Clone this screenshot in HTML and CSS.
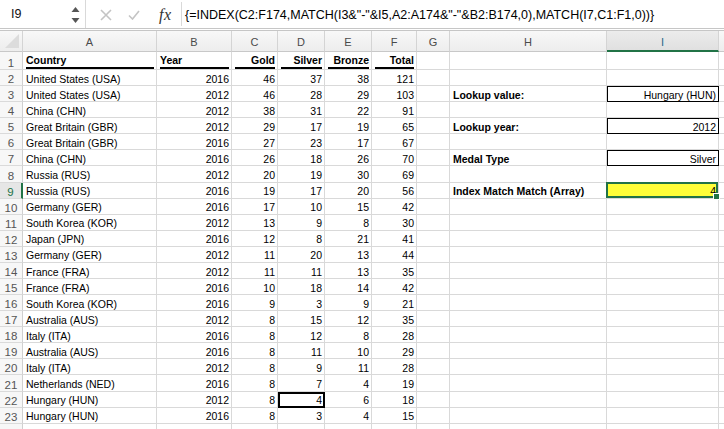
FILE: index.html
```html
<!DOCTYPE html>
<html>
<head>
<meta charset="utf-8">
<link rel="stylesheet" href="styles.css">
</head>
<body>
<div class="toolbar">
  <div class="namebox">
    <span class="ref">I9</span>
    <svg class="spin" width="9" height="18" viewBox="0 0 9 18"><polygon points="4.5,1 8.5,6 0.5,6" fill="#555"/><polygon points="0.5,12 8.5,12 4.5,17" fill="#555"/></svg>
  </div>
  <div class="btns">
    <svg class="ico x" width="12" height="12" viewBox="0 0 12 12"><path d="M1 1L11 11M11 1L1 11" stroke="#c4c4c4" stroke-width="1.6" fill="none"/></svg>
    <svg class="ico chk" width="12" height="10" viewBox="0 0 12 10"><path d="M1 5.5L4.5 9L11 1" stroke="#c4c4c4" stroke-width="1.6" fill="none"/></svg>
    <span class="fx">fx</span>
  </div>
  <div class="formula">{=INDEX(C2:F174,MATCH(I3&amp;"-"&amp;I5,A2:A174&amp;"-"&amp;B2:B174,0),MATCH(I7,C1:F1,0))}</div>
</div>

<div class="sheet">
  <div class="ch corner"></div><div class="ch">A</div><div class="ch">B</div><div class="ch">C</div><div class="ch">D</div><div class="ch">E</div><div class="ch">F</div><div class="ch">G</div><div class="ch">H</div><div class="ch sel">I</div><div class="ch end"></div>

  <div class="rh">1</div><div class="c b"><span class="u">Country</span></div><div class="c b"><span class="u">Year</span></div><div class="c b"><span class="u r">Gold</span></div><div class="c b"><span class="u r">Silver</span></div><div class="c b"><span class="u r">Bronze</span></div><div class="c b"><span class="u r">Total</span></div><div class="c"></div><div class="c"></div><div class="c"></div><div class="c end"></div>

  <div class="rh">2</div><div class="c">United States (USA)</div><div class="c n">2016</div><div class="c n">46</div><div class="c n">37</div><div class="c n">38</div><div class="c n">121</div><div class="c"></div><div class="c"></div><div class="c"></div><div class="c end"></div>

  <div class="rh">3</div><div class="c">United States (USA)</div><div class="c n">2012</div><div class="c n">46</div><div class="c n">28</div><div class="c n">29</div><div class="c n">103</div><div class="c"></div><div class="c b">Lookup value:</div><div class="c n box">Hungary (HUN)</div><div class="c end"></div>

  <div class="rh">4</div><div class="c">China (CHN)</div><div class="c n">2012</div><div class="c n">38</div><div class="c n">31</div><div class="c n">22</div><div class="c n">91</div><div class="c"></div><div class="c"></div><div class="c"></div><div class="c end"></div>

  <div class="rh">5</div><div class="c">Great Britain (GBR)</div><div class="c n">2012</div><div class="c n">29</div><div class="c n">17</div><div class="c n">19</div><div class="c n">65</div><div class="c"></div><div class="c b">Lookup year:</div><div class="c n box">2012</div><div class="c end"></div>

  <div class="rh">6</div><div class="c">Great Britain (GBR)</div><div class="c n">2016</div><div class="c n">27</div><div class="c n">23</div><div class="c n">17</div><div class="c n">67</div><div class="c"></div><div class="c"></div><div class="c"></div><div class="c end"></div>

  <div class="rh">7</div><div class="c">China (CHN)</div><div class="c n">2016</div><div class="c n">26</div><div class="c n">18</div><div class="c n">26</div><div class="c n">70</div><div class="c"></div><div class="c b">Medal Type</div><div class="c n box">Silver</div><div class="c end"></div>

  <div class="rh">8</div><div class="c">Russia (RUS)</div><div class="c n">2012</div><div class="c n">20</div><div class="c n">19</div><div class="c n">30</div><div class="c n">69</div><div class="c"></div><div class="c"></div><div class="c"></div><div class="c end"></div>

  <div class="rh selrow">9</div><div class="c">Russia (RUS)</div><div class="c n">2016</div><div class="c n">19</div><div class="c n">17</div><div class="c n">20</div><div class="c n">56</div><div class="c"></div><div class="c b">Index Match Match (Array)</div><div class="c n active">4</div><div class="c end"></div>

  <div class="rh">10</div><div class="c">Germany (GER)</div><div class="c n">2016</div><div class="c n">17</div><div class="c n">10</div><div class="c n">15</div><div class="c n">42</div><div class="c"></div><div class="c"></div><div class="c"></div><div class="c end"></div>

  <div class="rh">11</div><div class="c">South Korea (KOR)</div><div class="c n">2012</div><div class="c n">13</div><div class="c n">9</div><div class="c n">8</div><div class="c n">30</div><div class="c"></div><div class="c"></div><div class="c"></div><div class="c end"></div>

  <div class="rh">12</div><div class="c">Japan (JPN)</div><div class="c n">2016</div><div class="c n">12</div><div class="c n">8</div><div class="c n">21</div><div class="c n">41</div><div class="c"></div><div class="c"></div><div class="c"></div><div class="c end"></div>

  <div class="rh">13</div><div class="c">Germany (GER)</div><div class="c n">2012</div><div class="c n">11</div><div class="c n">20</div><div class="c n">13</div><div class="c n">44</div><div class="c"></div><div class="c"></div><div class="c"></div><div class="c end"></div>

  <div class="rh">14</div><div class="c">France (FRA)</div><div class="c n">2012</div><div class="c n">11</div><div class="c n">11</div><div class="c n">13</div><div class="c n">35</div><div class="c"></div><div class="c"></div><div class="c"></div><div class="c end"></div>

  <div class="rh">15</div><div class="c">France (FRA)</div><div class="c n">2016</div><div class="c n">10</div><div class="c n">18</div><div class="c n">14</div><div class="c n">42</div><div class="c"></div><div class="c"></div><div class="c"></div><div class="c end"></div>

  <div class="rh">16</div><div class="c">South Korea (KOR)</div><div class="c n">2016</div><div class="c n">9</div><div class="c n">3</div><div class="c n">9</div><div class="c n">21</div><div class="c"></div><div class="c"></div><div class="c"></div><div class="c end"></div>

  <div class="rh">17</div><div class="c">Australia (AUS)</div><div class="c n">2012</div><div class="c n">8</div><div class="c n">15</div><div class="c n">12</div><div class="c n">35</div><div class="c"></div><div class="c"></div><div class="c"></div><div class="c end"></div>

  <div class="rh">18</div><div class="c">Italy (ITA)</div><div class="c n">2016</div><div class="c n">8</div><div class="c n">12</div><div class="c n">8</div><div class="c n">28</div><div class="c"></div><div class="c"></div><div class="c"></div><div class="c end"></div>

  <div class="rh">19</div><div class="c">Australia (AUS)</div><div class="c n">2016</div><div class="c n">8</div><div class="c n">11</div><div class="c n">10</div><div class="c n">29</div><div class="c"></div><div class="c"></div><div class="c"></div><div class="c end"></div>

  <div class="rh">20</div><div class="c">Italy (ITA)</div><div class="c n">2012</div><div class="c n">8</div><div class="c n">9</div><div class="c n">11</div><div class="c n">28</div><div class="c"></div><div class="c"></div><div class="c"></div><div class="c end"></div>

  <div class="rh">21</div><div class="c">Netherlands (NED)</div><div class="c n">2016</div><div class="c n">8</div><div class="c n">7</div><div class="c n">4</div><div class="c n">19</div><div class="c"></div><div class="c"></div><div class="c"></div><div class="c end"></div>

  <div class="rh">22</div><div class="c">Hungary (HUN)</div><div class="c n">2012</div><div class="c n">8</div><div class="c n thick">4</div><div class="c n">6</div><div class="c n">18</div><div class="c"></div><div class="c"></div><div class="c"></div><div class="c end"></div>

  <div class="rh">23</div><div class="c">Hungary (HUN)</div><div class="c n">2016</div><div class="c n">8</div><div class="c n">3</div><div class="c n">4</div><div class="c n">15</div><div class="c"></div><div class="c"></div><div class="c"></div><div class="c end"></div>

  <div class="rh"></div><div class="c"></div><div class="c"></div><div class="c"></div><div class="c"></div><div class="c"></div><div class="c"></div><div class="c"></div><div class="c"></div><div class="c"></div><div class="c end"></div>
</div>
</body>
</html>
```

FILE: styles.css
```css
* { box-sizing: border-box; }
html, body { margin: 0; padding: 0; background: #fff; }
body {
  width: 724px;
  height: 429px;
  overflow: hidden;
  font-family: "Liberation Sans", Arial, sans-serif;
  color: #000;
}

/* ---------- formula toolbar ---------- */
.toolbar {
  display: flex;
  align-items: stretch;
  height: 29px;
  border-bottom: 1px solid #c6c6c6;
  margin-bottom: 1px;
  background: #fff;
}
.namebox {
  width: 86px;
  display: flex;
  align-items: center;
  justify-content: space-between;
  padding: 0 5px 0 11px;
  border-right: 1px solid #d9d9d9;
}
.ref { font-size: 12.5px; color: #111; }
.spin { display: block; margin-top: 1px; }
.btns {
  width: 96px;
  display: flex;
  align-items: center;
  padding-left: 14px;
  border-right: 1px solid #d9d9d9;
  margin: 2px 0;
}
.ico { display: block; }
.ico.x { margin-right: 16px; margin-top: 2px; }
.ico.chk { margin-right: 19px; margin-top: 2px; }
.fx {
  font-family: "Liberation Serif", serif;
  font-style: italic;
  font-size: 16px;
  color: #333;
  letter-spacing: 0.5px;
  margin-top: 1px;
}
.formula {
  flex: 1;
  display: flex;
  align-items: center;
  padding-left: 3px;
  font-size: 12.5px;
  color: #000;
  white-space: nowrap;
  overflow: hidden;
  padding-top: 1px;
}

/* ---------- sheet grid ---------- */
.sheet {
  display: grid;
  grid-template-columns: 23px 134px 75px 46px 47px 47px 45px 33px 157px 112px 1fr;
  grid-template-rows: 21px 18px repeat(22, 16.09px) 20px;
  border-top: 1px solid #c6c6c6;
}

.ch {
  background: linear-gradient(#f8f8f8, #ededed);
  border-right: 1px solid #d4d4d4;
  border-bottom: 1px solid #c8c8c8;
  display: flex;
  align-items: center;
  justify-content: center;
  font-size: 11px;
  color: #4a4a4a;
  padding-top: 2px;
}
.ch.corner {
  position: relative;
}
.ch.corner::after {
  content: "";
  position: absolute;
  right: 3px;
  bottom: 3px;
  width: 0;
  height: 0;
  border-left: 14px solid transparent;
  border-bottom: 14px solid #dcdcdc;
}
.ch.sel {
  background: linear-gradient(#ececec, #e0e0e0);
  border-bottom: 2px solid #217346;
  color: #1d6a8a;
}
.ch.end, .c.end { border-right: none; }

.rh {
  background: #f7f7f7;
  border-right: 1px solid #d0d0d0;
  border-bottom: 1px solid #dadada;
  display: flex;
  align-items: flex-end;
  justify-content: center;
  font-size: 11.5px;
  color: #555;
  line-height: 12px;
  padding-bottom: 0;
}
.rh.selrow {
  background: #e6e6e6;
  color: #217346;
  border-right: 2px solid #217346;
}

.c {
  border-right: 1px solid #d9d9d9;
  border-bottom: 1px solid #d9d9d9;
  display: flex;
  align-items: flex-end;
  padding: 0 2px 0 3px;
  font-size: 10.5px;
  line-height: 11.5px;
  white-space: nowrap;
  overflow: visible;
}
.c.n { justify-content: flex-end; }
.c.b { font-weight: bold; }
.c .u {
  flex: 1;
  border-bottom: 2px solid #000;
  padding-bottom: 0;
  line-height: 13px;
}
.c .u.r { text-align: right; }

.c.box {
  outline: 1px solid #000;
  outline-offset: -1px;
}
.c.thick {
  outline: 2px solid #000;
  outline-offset: -2px;
}
.c.active {
  position: relative;
  background: #ffff38;
}
.c.active::after {
  content: "";
  position: absolute;
  left: -1px;
  top: -1px;
  right: 0;
  bottom: 0;
  border: 2px solid #217346;
}
.c.active::before {
  content: "";
  position: absolute;
  right: -2px;
  bottom: -2px;
  width: 5px;
  height: 5px;
  background: #217346;
  border: 1px solid #fff;
  z-index: 1;
}
```
